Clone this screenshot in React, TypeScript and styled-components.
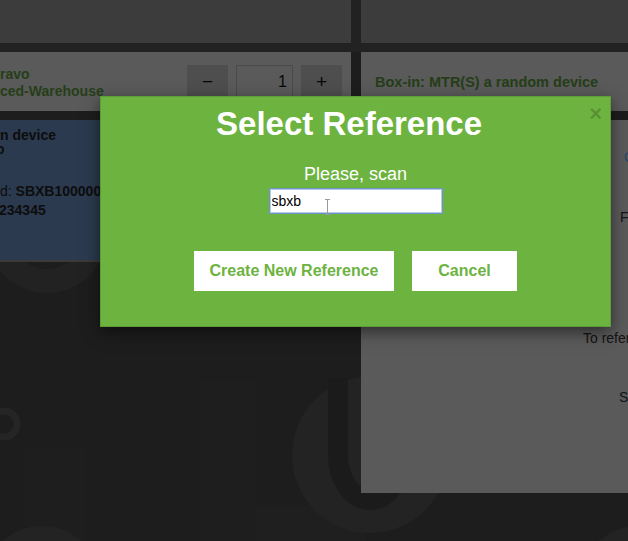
import React from 'react';
import styled, { createGlobalStyle } from 'styled-components';

const green = '#6db33f';
const font = '"Liberation Sans", Arial, sans-serif';

const GlobalStyle = createGlobalStyle`
	html, body {
		margin: 0;
		padding: 0;
		background: #1d1d1d;
	}
	* {
		box-sizing: border-box;
	}
`;

const Screen = styled.div`
	position: relative;
	width: 628px;
	height: 541px;
	overflow: hidden;
	background: #3a3a3a;
	font-family: ${font};
`;

const Decor = styled.svg`
	position: absolute;
	left: 0;
	top: 0;
	width: 628px;
	height: 541px;
`;

const Page = styled.div`
	position: relative;
	display: flex;
	flex-direction: column;
`;

const TopBar = styled.div`
	display: grid;
	grid-template-columns: 351px 1fr;
	column-gap: 10px;
	height: 43px;
	background: #444;
`;

const TopCell = styled.div`
	background: #787878;
`;

const Columns = styled.div`
	display: grid;
	grid-template-columns: 351px 1fr;
	column-gap: 10px;
	align-items: start;
	padding-top: 9px;
	background: linear-gradient(#444 0 9px, transparent 9px);
`;

const Column = styled.div`
	display: flex;
	flex-direction: column;
	gap: 9px;
	min-width: 0;
`;

const LeftHeader = styled.div`
	height: 59px;
	background: #b4b4b4;
	display: flex;
	justify-content: space-between;
	align-items: flex-start;
	padding: 13px 9px 0 0;
`;

const HeaderTitle = styled.div`
	margin-top: 1px;
	color: #4b7d33;
	font-size: 14px;
	font-weight: bold;
	line-height: 17px;
	white-space: nowrap;
`;

const Stepper = styled.div`
	display: flex;
	gap: 8px;
`;

const StepButton = styled.button`
	width: 41px;
	height: 34px;
	border: 0;
	padding: 0;
	background: #9c9c9c;
	color: #111;
	font-family: ${font};
	font-size: 19px;
	line-height: 34px;
	text-align: center;
`;

const StepInput = styled.input`
	width: 57px;
	height: 34px;
	border: 1px solid #949494;
	background: #b4b4b4;
	color: #111;
	font-family: ${font};
	font-size: 16px;
	text-align: right;
	padding: 0 5px 0 0;
	outline: none;
`;

const Card = styled.div`
	height: 142px;
	background: #56749e;
	border-bottom: 2px solid #747474;
	padding-top: 8px;
	color: #1a1a1a;
	font-size: 14px;
	white-space: nowrap;
	overflow: hidden;
`;

const CardTitle = styled.div`
	font-weight: bold;
	line-height: 14px;
`;

const Cut = styled.span<{ $shift: number }>`
	display: inline-block;
	margin-left: ${(p) => -p.$shift}px;
`;

const CardFields = styled.div`
	margin-top: 26px;
	line-height: 19px;
`;

const Label = styled.span`
	font-weight: normal;
`;

const Value = styled.span`
	font-weight: bold;
`;

const RightHeader = styled.div`
	height: 59px;
	background: #b4b4b4;
	display: flex;
	align-items: center;
	padding-left: 14px;
	color: #4b7d33;
	font-size: 14.5px;
	font-weight: bold;
	white-space: nowrap;
`;

const RightBody = styled.div`
	height: 373px;
	background: #b4b4b4;
	display: flex;
	flex-direction: column;
	overflow: hidden;
`;

const BodyLine = styled.div<{ $top: number; $indent: number; $link?: boolean }>`
	margin-top: ${(p) => p.$top}px;
	padding-left: ${(p) => p.$indent}px;
	font-size: 14px;
	line-height: 16px;
	white-space: nowrap;
	color: ${(p) => (p.$link ? '#4f8fd9' : '#2a2a2a')};
`;

const Backdrop = styled.div`
	position: absolute;
	inset: 0;
	background: rgba(0, 0, 0, 0.5);
`;

const Modal = styled.div`
	position: absolute;
	left: 100px;
	top: 96px;
	width: 511px;
	height: 231px;
	background: ${green};
	border: 1px solid #5c9d35;
	box-shadow: 0 5px 15px rgba(0, 0, 0, 0.5);
	display: flex;
	flex-direction: column;
	align-items: center;
	color: #fff;
`;

const ModalHeader = styled.div`
	align-self: stretch;
	display: flex;
	align-items: flex-start;
	padding: 10px 8px 0 8px;
`;

const ModalTitle = styled.h2`
	flex: 1;
	margin: 0;
	text-align: center;
	font-size: 33px;
	line-height: 33px;
	font-weight: bold;
`;

const CloseButton = styled.button`
	border: 0;
	background: none;
	padding: 0;
	margin-top: -4px;
	font-family: ${font};
	font-size: 22px;
	font-weight: bold;
	line-height: 22px;
	color: rgba(0, 0, 0, 0.2);
`;

const Prompt = styled.div`
	margin-top: 25px;
	font-size: 18px;
	line-height: 18px;
`;

const InputWrap = styled.div`
	position: relative;
	margin-top: 5px;
`;

const ScanInput = styled.input`
	display: block;
	width: 174px;
	height: 26px;
	border: 1px solid #6d93c9;
	box-shadow: inset 0 0 0 1px #b5c9e8;
	background: #fff;
	padding: 0 0 0 2px;
	font-family: ${font};
	font-size: 14px;
	color: #000;
	outline: none;
`;

const Caret = styled.svg`
	position: absolute;
	left: 55px;
	top: 11px;
	width: 7px;
	height: 16px;
`;

const Actions = styled.div`
	display: flex;
	gap: 18px;
	margin-top: 37px;
`;

const ActionButton = styled.button`
	height: 40px;
	min-width: 105px;
	padding: 0 15.5px;
	border: 0;
	background: #fff;
	color: ${green};
	font-family: ${font};
	font-size: 16px;
	font-weight: bold;
`;

export default function App() {
	return (
		<>
			<GlobalStyle />
			<Screen>
				<Decor viewBox='0 0 628 541'>
					<rect x='25' y='447' width='60' height='94' fill='#3c3c3c' />
					<rect x='200' y='380' width='55' height='161' fill='#3c3c3c' />
					<rect x='255' y='505' width='110' height='36' fill='#3f3f3f' />
					<circle cx='47' cy='233' r='48' fill='none' stroke='#444' strokeWidth='24' />
					<circle cx='4' cy='424' r='13' fill='none' stroke='#4a4a4a' strokeWidth='7' />
					<circle cx='370' cy='455' r='78' fill='#464646' />
					<path d='M338 378 V455 A32 45 0 0 0 402 455 V378' fill='none' stroke='#363636' strokeWidth='20' />
					<circle cx='42' cy='585' r='50' fill='none' stroke='#464646' strokeWidth='18' />
					<circle cx='640' cy='590' r='55' fill='none' stroke='#464646' strokeWidth='18' />
				</Decor>
				<Page>
					<TopBar>
						<TopCell />
						<TopCell />
					</TopBar>
					<Columns>
						<Column>
							<LeftHeader>
								<HeaderTitle>
									ravo
									<br />
									ced-Warehouse
								</HeaderTitle>
								<Stepper>
									<StepButton>−</StepButton>
									<StepInput defaultValue='1' />
									<StepButton>+</StepButton>
								</Stepper>
							</LeftHeader>
							<Card>
								<CardTitle>
									n device
									<br />
									<Cut $shift={4}>o</Cut>
								</CardTitle>
								<CardFields>
									<Label>d: </Label>
									<Value>SBXB1000000</Value>
									<br />
									<Value>
										<Cut $shift={1}>234345</Cut>
									</Value>
								</CardFields>
							</Card>
						</Column>
						<Column>
							<RightHeader>Box-in: MTR(S) a random device</RightHeader>
							<RightBody>
								<BodyLine $top={29} $indent={263} $link>
									Change
								</BodyLine>
								<BodyLine $top={44} $indent={259}>
									Fill in
								</BodyLine>
								<BodyLine $top={105} $indent={222}>
									To reference
								</BodyLine>
								<BodyLine $top={43} $indent={258}>
									Scan
								</BodyLine>
							</RightBody>
						</Column>
					</Columns>
				</Page>
				<Backdrop />
				<Modal>
					<ModalHeader>
						<ModalTitle>Select Reference</ModalTitle>
						<CloseButton>×</CloseButton>
					</ModalHeader>
					<Prompt>Please, scan</Prompt>
					<InputWrap>
						<ScanInput defaultValue='sbxb' />
						<Caret viewBox='0 0 7 16'>
							<path d='M1 0.5 H6 M3.5 0.5 V15.5 M1 15.5 H6' stroke='#9a9a9a' strokeWidth='1' fill='none' />
						</Caret>
					</InputWrap>
					<Actions>
						<ActionButton>Create New Reference</ActionButton>
						<ActionButton>Cancel</ActionButton>
					</Actions>
				</Modal>
			</Screen>
		</>
	);
}
